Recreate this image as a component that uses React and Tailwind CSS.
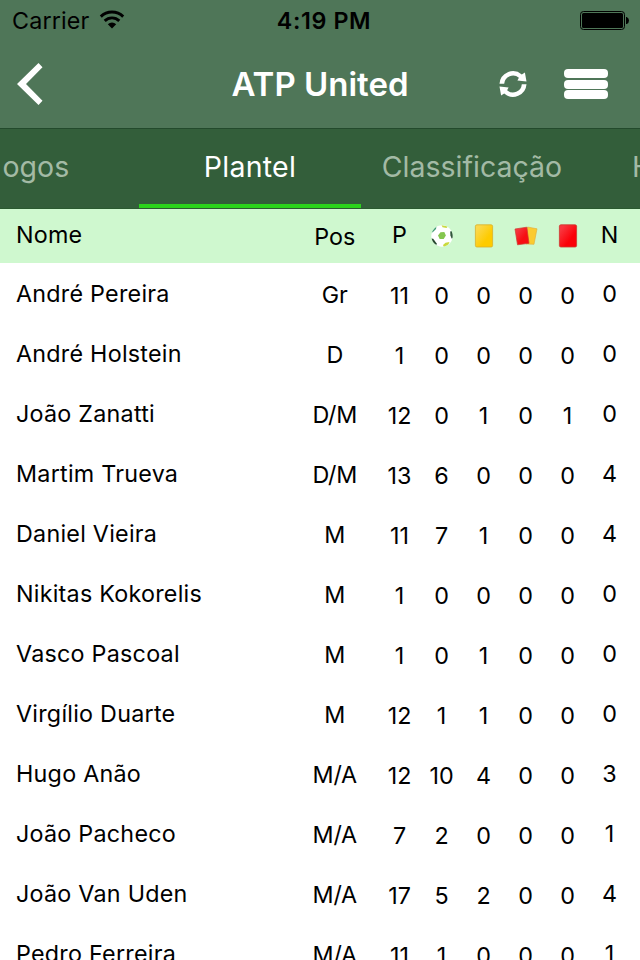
import React from "react";

// the strip is scrolled, so the outer tabs only show part of their label
const TABS = [
  { label: "ogos", className: "w-[139px] pl-[2.5px] text-left text-[#a3baa5]" },
  {
    label: "Plantel",
    className:
      "w-[222px] text-center text-white tracking-[0.25px] border-b-4 border-[#2bd41b]",
  },
  { label: "Classificação", className: "w-[222px] text-center text-[#a3baa5]" },
  { label: "H", className: "w-[57px] pl-[49px] text-left text-[#a3baa5]" },
];

// name, position, games, goals, yellow, double yellow, red, N
const PLAYERS = [
  ["André Pereira", "Gr", 11, 0, 0, 0, 0, 0],
  ["André Holstein", "D", 1, 0, 0, 0, 0, 0],
  ["João Zanatti", "D/M", 12, 0, 1, 0, 1, 0],
  ["Martim Trueva", "D/M", 13, 6, 0, 0, 0, 4],
  ["Daniel Vieira", "M", 11, 7, 1, 0, 0, 4],
  ["Nikitas Kokorelis", "M", 1, 0, 0, 0, 0, 0],
  ["Vasco Pascoal", "M", 1, 0, 1, 0, 0, 0],
  ["Virgílio Duarte", "M", 12, 1, 1, 0, 0, 0],
  ["Hugo Anão", "M/A", 12, 10, 4, 0, 0, 3],
  ["João Pacheco", "M/A", 7, 2, 0, 0, 0, 1],
  ["João Van Uden", "M/A", 17, 5, 2, 0, 0, 4],
  ["Pedro Ferreira", "M/A", 11, 1, 0, 0, 0, 1],
];

const COLUMNS =
  "grid grid-cols-[274px_88.5px_repeat(6,42px)] pl-4 text-center text-[23.3px]";

function WifiIcon() {
  return (
    <svg width="26" height="19" viewBox="0 0 26 19" className="mt-[10px] ml-[10px]">
      <g fill="none" stroke="#000" strokeWidth="2.9">
        <path d="M1.8 6.6a16 16 0 0 1 22.4 0" />
        <path d="M5.7 10.9a10.4 10.4 0 0 1 14.6 0" />
      </g>
      <path d="M13 18.4l-4.2-4.2a6 6 0 0 1 8.4 0z" />
    </svg>
  );
}

function BatteryIcon() {
  return (
    <svg width="50" height="19" viewBox="0 0 50 19" className="mt-[11px]">
      <rect x="0.5" y="0.5" width="44" height="18" rx="3" fill="none" stroke="#000" />
      <rect x="2" y="2" width="41" height="15" rx="1.5" />
      <path d="M46 6h.8q2.2 1 2.2 3.5t-2.2 3.5h-.8z" />
    </svg>
  );
}

function RefreshIcon() {
  const arrow =
    "M.5 13.7A13.5 13.5 0 0 1 22.8 4.4L25.9 2.6L27.5 11.6L18.4 10.6L19.9 7.8A8.8 8.8 0 0 0 5.2 13.7z";
  return (
    <svg width="28" height="28" viewBox="0 0 28 28" fill="#fff">
      <path d={arrow} />
      <path transform="rotate(180 14 14)" d={arrow} />
    </svg>
  );
}

function BallIcon() {
  return (
    <svg width="22" height="22" viewBox="0 0 22 22">
      <defs>
        <clipPath id="ball">
          <circle cx="11" cy="11" r="10.7" />
        </clipPath>
      </defs>
      <circle cx="11" cy="11" r="10.7" fill="#fff" />
      <g clipPath="url(#ball)">
        <path d="M9.500 7.200l3.800-.2 1.600 3.500-2.200 3.500-4 .1-1.700-3.600z" fill="#84c64e" />
        <path d="M10.500 0l6.500 1.500-1.500 1.500-4-.8z" fill="#c9d943" />
        <path d="M0 8l2-5 3.500-2-.5 3-3 3z" fill="#3d9a70" />
        <path d="M22 5.500l-2.800 1 .2 4 1.200 3 1.900-.5z" fill="#31573c" />
        <path d="M0 13.500l2.200.3 3.300 4.500v3L1.500 18z" fill="#26492f" />
        <path d="M12 20l2.500-2.300 4-.8-1.500 3.500-4 2z" fill="#c9d93a" />
      </g>
    </svg>
  );
}

function CardIcon({ id, from, to, edge }) {
  return (
    <svg width="20" height="24" viewBox="0 0 20 24">
      <linearGradient id={id} x1="0" y1="0" x2="1" y2="1">
        <stop offset="0.15" stopColor={from} />
        <stop offset="0.65" stopColor={to} />
      </linearGradient>
      <rect x="1.4" y="0.8" width="17.2" height="22.2" rx="1.5" fill={`url(#${id})`} stroke={edge} strokeWidth="0.8" />
    </svg>
  );
}

function DoubleCardIcon() {
  return (
    <svg width="24" height="20" viewBox="0 0 24 20">
      <linearGradient id="second" x1="0" y1="0" x2="1" y2="1">
        <stop offset="0.2" stopColor="#f5333b" />
        <stop offset="0.6" stopColor="#f70d12" />
      </linearGradient>
      <path d="M13.5 1L23 2.8L20 18.3L12 18z" fill="#fbcb30" stroke="#e0a93a" strokeWidth="0.6" strokeLinejoin="round" />
      <path d="M1 3L12.8 1.2L15 17.3L3.5 18.8z" fill="url(#second)" stroke="#cd3a30" strokeWidth="0.7" strokeLinejoin="round" />
    </svg>
  );
}

function PlayerRow({ player }) {
  const [name, position, ...stats] = player;
  return (
    <div className={`${COLUMNS} h-[60px] leading-[62px]`}>
      <div className="text-left whitespace-nowrap tracking-[0.25px]">{name}</div>
      <div className="pt-px pl-px tracking-[-0.2px]">{position}</div>
      {stats.map((value, index) => (
        <div key={index} className={index === 5 ? "" : "pt-[2px]"}>
          {value}
        </div>
      ))}
    </div>
  );
}

export default function App() {
  return (
    <div className="w-[640px] h-[960px] overflow-hidden bg-white text-black font-['Inter','Liberation_Sans',sans-serif]">
      {/* Status bar + navigation */}
      <header className="h-[128px] bg-[#4f7658]">
        <div className="grid grid-cols-[270px_108px_1fr] h-10 leading-[41px] text-[23.3px]">
          <div className="flex pl-3">
            <span className="tracking-[0.15px]">Carrier</span>
            <WifiIcon />
          </div>
          <div className="text-center font-semibold whitespace-nowrap tracking-[0.6px]">
            4:19 PM
          </div>
          <div className="flex justify-end pr-[10px]">
            <BatteryIcon />
          </div>
        </div>
        <div className="grid grid-cols-[160px_320px_1fr] h-[88px] items-center">
          <svg width="26" height="42" viewBox="0 0 26 42" className="ml-[17px]" fill="#fff">
            <path d="M21.5 0l4 4.2L9 21l16.500 16.800-4 4.200L0 21z" />
          </svg>
          <h1 className="text-center text-[33px] leading-[88px] font-semibold text-white">
            ATP United
          </h1>
          <div className="flex items-center pl-[19px] gap-[37px]">
            <RefreshIcon />
            <div className="flex flex-col gap-[1.5px]">
              <span className="w-11 h-[9px] rounded-[4px] bg-white" />
              <span className="w-11 h-[9px] rounded-[4px] bg-white" />
              <span className="w-11 h-[9px] rounded-[4px] bg-white" />
            </div>
          </div>
        </div>
      </header>

      {/* Tabs */}
      <nav className="flex h-[81px] border-y border-t-[#234a2c] border-b-[#2b5a30] bg-[#335e3a] text-[28.5px] leading-[76px]">
        {TABS.map(({ label, className }) => (
          <div key={label} className={`shrink-0 ${className}`}>
            {label}
          </div>
        ))}
      </nav>

      {/* Squad */}
      <div className={`${COLUMNS} h-[54px] leading-[52px] bg-[#cff8cf]`}>
        <div className="text-left tracking-[0.2px]">Nome</div>
        <div className="pt-[2px] pl-px">Pos</div>
        <div>P</div>
        <div className="flex items-center justify-center">
          <BallIcon />
        </div>
        <div className="flex items-center justify-center">
          <CardIcon id="yellow" from="#fbd84c" to="#fecb00" edge="#d8b02c" />
        </div>
        <div className="flex items-center justify-center">
          <DoubleCardIcon />
        </div>
        <div className="flex items-center justify-center">
          <CardIcon id="red" from="#f9363e" to="#fb0008" edge="#cc3830" />
        </div>
        <div>N</div>
      </div>
      {PLAYERS.map((player) => (
        <PlayerRow key={player[0]} player={player} />
      ))}
    </div>
  );
}
